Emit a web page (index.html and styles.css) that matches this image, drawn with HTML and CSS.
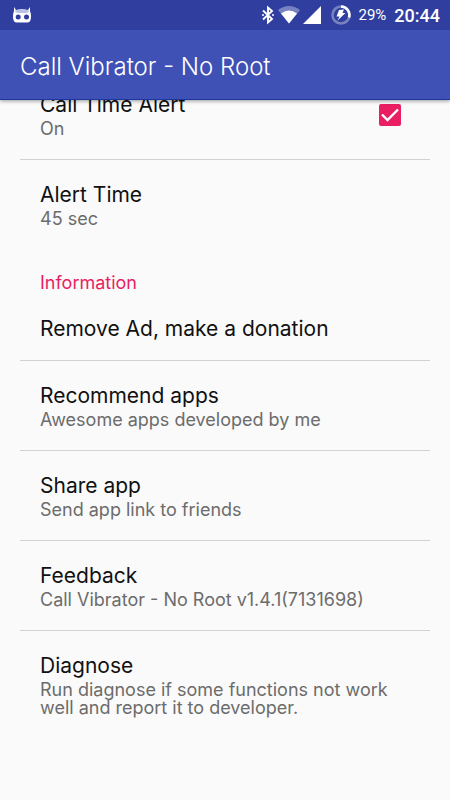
FILE: index.html
```html
<!DOCTYPE html>
<html lang="en">
<head>
    <meta charset="UTF-8">
    <meta name="viewport" content="width=device-width, initial-scale=1">
    <title>Call Vibrator - No Root</title>
    <link rel="stylesheet" href="styles.css">
</head>
<body>
    <header class="top">
        <div class="status-bar">
            <svg class="icon-notify" width="20" height="18" viewBox="0 0 20 18">
                <path fill="#fff" d="M2 1 L4 4 Q10 2.6 16 4 L18 1 L18 5 Q19 7 19 11 Q19 16.500 15 16.500 H5 Q1 16.500 1 11 Q1 7 2 5 Z"/>
                <path fill="#bcc2e4" d="M3 4.5 Q10 2.6 17 4.5 L16.500 6.500 Q10 7.500 3.500 6.500 Z"/>
                <circle cx="6.200" cy="11" r="2.500" fill="#303f9f"/>
                <circle cx="14.500" cy="11" r="2.500" fill="#303f9f"/>
            </svg>
            <div class="status-icons">
                <svg width="14" height="20" viewBox="0 0 14 20">
                    <path fill="none" stroke="#fff" stroke-width="1.900" d="M2 5.500 L11 14 L7 17.500 V2.500 L11 6 L2 14.500"/>
                    <circle cx="2" cy="10" r="1" fill="#fff"/>
                    <circle cx="12" cy="10" r="1" fill="#fff"/>
                </svg>
                <svg width="22" height="18" viewBox="0 0 22 18">
                    <path fill="#7982c1" d="M0 4 Q11 -4 22 4 L11 17.500 Z"/>
                    <path fill="#fff" d="M3 7.500 Q11 1.500 19 7.500 L11 17.500 Z"/>
                </svg>
                <svg width="18" height="18" viewBox="0 0 18 18">
                    <path fill="#fff" d="M18 0 V18 H0 Z"/>
                </svg>
                <svg class="icon-battery" width="20" height="20" viewBox="0 0 20 20">
                    <circle cx="10" cy="10" r="8.500" fill="none" stroke="#7982c1" stroke-width="2.600"/>
                    <path fill="none" stroke="#fff" stroke-width="2.600" d="M10 1.500 A8.500 8.500 0 0 1 18 12.500"/>
                    <path fill="#fff" d="M8 5 L13 4.500 L11.500 8 H14.500 L6.500 15.500 L8.500 11.500 H5.500 Z"/>
                </svg>
                <span class="battery-text">29%</span>
                <span class="clock">20:44</span>
            </div>
        </div>
        <h1 class="app-title">Call Vibrator - No Root</h1>
    </header>

    <main class="settings">
        <label class="item item-check" for="time-alert">
            <span class="item-text">
                <span class="item-title">Call Time Alert</span>
                <span class="item-summary">On</span>
            </span>
            <input class="check" type="checkbox" id="time-alert" checked>
            <svg class="check-box" width="22" height="22" viewBox="0 0 22 22">
                <rect width="22" height="22" rx="2" fill="#e91e63"/>
                <path class="check-mark" fill="none" stroke="#fff" stroke-width="2.400" d="M3 10.500 L8.500 16 L19 5.500"/>
            </svg>
        </label>
        <button class="item item-last" type="button">
            <span class="item-title">Alert Time</span>
            <span class="item-summary">45 sec</span>
        </button>

        <h2 class="category">Information</h2>
        <button class="item item-single" type="button">
            <span class="item-title">Remove Ad, make a donation</span>
        </button>
        <button class="item" type="button">
            <span class="item-title">Recommend apps</span>
            <span class="item-summary">Awesome apps developed by me</span>
        </button>
        <button class="item" type="button">
            <span class="item-title">Share app</span>
            <span class="item-summary">Send app link to friends</span>
        </button>
        <button class="item" type="button">
            <span class="item-title">Feedback</span>
            <span class="item-summary">Call Vibrator - No Root v1.4.1(7131698)</span>
        </button>
        <button class="item item-last" type="button">
            <span class="item-title">Diagnose</span>
            <span class="item-summary">Run diagnose if some functions not work well and report it to developer.</span>
        </button>
    </main>
</body>
</html>
```

FILE: styles.css
```css
body {
    margin: 0;
    background-color: #fafafa;
    font-family: Inter, "Open Sans", sans-serif;
    color: #111;
}

/* Header */
.top {
    position: sticky;
    top: 0;
    z-index: 1;
    background-color: #3f51b5;
    color: #fff;
    border-bottom: 1px solid #1c36a0;
    box-shadow: 0 1px 4px rgba(0, 0, 0, 0.4);
}

.status-bar {
    display: flex;
    align-items: center;
    justify-content: space-between;
    height: 30px;
    padding: 0 10px 0 12px;
    background-color: #303f9f;
    font-family: Roboto, sans-serif;
}

.status-icons {
    display: flex;
    align-items: center;
    gap: 3px;
}

.icon-battery {
    margin: 0 4px 0 7px;
}

.battery-text {
    font-size: 15px;
    margin-right: 5px;
}

.clock {
    font-size: 18px;
    font-weight: 500;
}

.app-title {
    margin: 0;
    padding: 22px 20px 18px;
    font-size: 24px;
    font-weight: 300;
    line-height: 29px;
}

/* List, scrolled a little under the header */
.settings {
    margin-top: -30px;
    padding: 0 20px;
}

.item {
    display: block;
    box-sizing: border-box;
    width: 100%;
    padding: 22px 20px 21px;
    border: 0;
    border-bottom: 1px solid #d2d2d2;
    background: none;
    color: inherit;
    font-family: inherit;
    text-align: left;
    cursor: pointer;
}

.item-check {
    display: flex;
    align-items: center;
    justify-content: space-between;
    padding-right: 29px;
}

.item-title {
    display: block;
    font-size: 21px;
    font-weight: 400;
    line-height: 26px;
}

.item-summary {
    display: block;
    margin-top: 2px;
    font-size: 18px;
    font-weight: 400;
    line-height: 18px;
    color: #6c6c6c;
}

.item-last {
    border-bottom-color: transparent;
}

.item-single {
    padding-bottom: 18px;
}

.category {
    margin: 0;
    padding: 23px 20px 1px;
    font-size: 18px;
    font-weight: 400;
    line-height: 20px;
    color: #e91e63;
}

/* Checkbox */
.check {
    position: absolute;
    opacity: 0;
}

.check:not(:checked) + .check-box .check-mark {
    display: none;
}
```
